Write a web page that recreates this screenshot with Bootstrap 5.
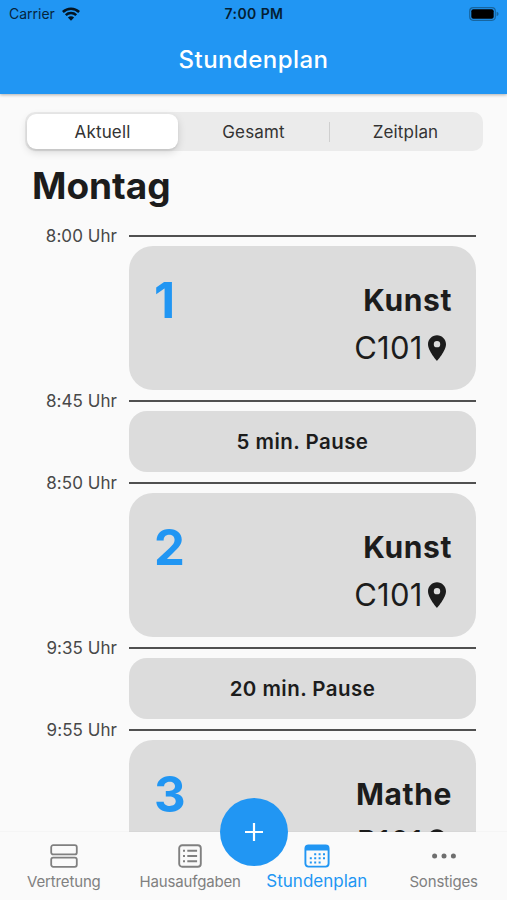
<!DOCTYPE html>
<html lang="de">
<head>
<meta charset="utf-8">
<meta name="viewport" content="width=device-width, initial-scale=1">
<title>Stundenplan</title>
<link href="https://cdn.jsdelivr.net/npm/bootstrap@5.3.0/dist/css/bootstrap.min.css" rel="stylesheet">
<style>
  body { font-family: Inter, "Liberation Sans", sans-serif; background: #fafafa; color: #1c1c1c; }
  .screen { height: 900px; }
  .app-header { height: 94px; background: #2196f3; box-shadow: 0 1px 3px rgba(0,0,0,.3); z-index: 2; }
  .status { height: 27px; padding: 0 8px 0 9px; font-size: 14px; color: #06243d; }
  .status .carrier { gap: 7px; }
  .status .clock { font-size: 14px; font-weight: 600; letter-spacing: .4px; color: #041e33; }
  .app-title { height: 66px; font-size: 24px; font-weight: 500; letter-spacing: .45px; color: #fff; }
  .segments { height: 39px; margin: 18px 24px 0 25px; padding: 2px; border-radius: 10px; background: #ebebeb; font-size: 17px; letter-spacing: .15px; color: #333; }
  .segments .active { background: #fff; border-radius: 9px; box-shadow: 0 3px 8px rgba(0,0,0,.14), 0 2px 2px rgba(0,0,0,.06); }
  .segments .divider { width: 1px; height: 20px; background: #cfcfcf; }
  .segments .label { padding-top: 2px; }
  .day { height: 74.4px; padding: 13px 0 0 32px; font-size: 37px; font-weight: 700; line-height: 44px; letter-spacing: -.05px; }
  .plan { padding-right: 31px; }
  .time-row { height: 21px; }
  .time-row .hour { width: 129px; padding: 1px 12px 0 0; font-size: 17px; line-height: 21px; letter-spacing: .05px; color: #484848; text-align: right; }
  .time-row .rule { height: 1.6px; background: #505050; }
  .lesson, .pause { margin-left: 129px; background: #dcdcdc; flex: none; }
  .lesson { height: 144px; border-radius: 24px; padding: 30px 24px 0 25px; }
  .lesson .num { font-size: 49px; line-height: 49px; font-weight: 700; color: #2196f3; }
  .lesson .subject { font-size: 30px; line-height: 49px; font-weight: 700; letter-spacing: .6px; }
  .lesson .place { font-size: 31px; line-height: 46px; font-weight: 400; letter-spacing: .2px; padding-right: 6px; gap: 5.5px; }
  .pause { height: 61px; border-radius: 18px; font-size: 20.5px; font-weight: 600; letter-spacing: .45px; padding-top: 1px; }
  .tabs { height: 68px; background: #fafafa; color: #808080; font-size: 15px; letter-spacing: -.15px; z-index: 2; box-shadow: 0 -1px 0 rgba(0,0,0,.02); }
  .tabs .tab { width: 25%; padding-top: 11.5px; }
  .tabs .tab:first-child { padding-left: 1px; }
  .tabs svg { height: 24px; }
  .tabs .caption { line-height: 20px; margin-top: 4.5px; white-space: nowrap; }
  .tabs .current { color: #2196f3; }
  .tabs .current .caption { font-size: 17px; letter-spacing: 0; margin-top: 3.5px; }
  .fab { width: 68px; height: 68px; left: 220px; top: -34.5px; background: #2196f3; }
</style>
<script src="https://cdn.jsdelivr.net/npm/bootstrap@5.3.0/dist/js/bootstrap.bundle.min.js"></script>
</head>
<body>
<svg class="d-none">
  <symbol id="pin" viewBox="5 2 14 20"><path fill="currentColor" fill-rule="evenodd" d="M12 2C8.13 2 5 5.13 5 9c0 5.25 7 13 7 13s7-7.75 7-13c0-3.87-3.13-7-7-7zm0 9.5a2.5 2.5 0 0 1 0-5 2.5 2.5 0 0 1 0 5z"/></symbol>
</svg>
<div class="screen d-flex flex-column overflow-hidden">
  <header class="app-header position-relative flex-shrink-0">
    <div class="status d-flex align-items-center">
      <div class="carrier col d-flex align-items-center"><span>Carrier</span>
        <svg width="18" height="14" viewBox="0 0 18 14" fill="none" stroke="#041522" stroke-width="2.5"><path d="M.9 5a11.6 11.6 0 0 1 16.2 0"/><path d="M3.8 8.2a7.4 7.4 0 0 1 10.4 0"/><path d="M9 13.7 5.9 10.5a4.4 4.4 0 0 1 6.2 0z" fill="#041522" stroke="none"/></svg>
      </div>
      <div class="clock">7:00 PM</div>
      <div class="col d-flex justify-content-end">
        <svg width="30" height="14" viewBox="0 0 30 14"><rect x=".7" y=".7" width="25.6" height="12.6" rx="3.5" fill="none" stroke="#17659f" stroke-width="1.2"/><rect x="2.3" y="2.3" width="22.4" height="9.4" rx="2" fill="#000"/><path d="M27.6 4.8q2 .6 2 2.2t-2 2.2z" fill="#17659f"/></svg>
      </div>
    </div>
    <div class="app-title d-flex align-items-center justify-content-center">Stundenplan</div>
  </header>

  <main class="flex-grow-1 overflow-hidden d-flex flex-column">
    <div class="segments d-flex align-items-center flex-shrink-0">
      <div class="active col h-100 d-flex align-items-center justify-content-center"><span class="label">Aktuell</span></div>
      <div class="label col text-center">Gesamt</div>
      <div class="divider"></div>
      <div class="label col text-center">Zeitplan</div>
    </div>
    <div class="day flex-shrink-0">Montag</div>
    <div class="plan">
      <div class="time-row d-flex align-items-center"><div class="hour">8:00 Uhr</div><div class="rule flex-grow-1"></div></div>
      <div class="lesson d-flex justify-content-between">
        <div class="num">1</div>
        <div><div class="subject text-end">Kunst</div><div class="place d-flex align-items-center justify-content-end"><span>C101</span><svg width="18" height="26"><use href="#pin"/></svg></div></div>
      </div>
      <div class="time-row d-flex align-items-center"><div class="hour">8:45 Uhr</div><div class="rule flex-grow-1"></div></div>
      <div class="pause d-flex align-items-center justify-content-center">5 min. Pause</div>
      <div class="time-row d-flex align-items-center"><div class="hour">8:50 Uhr</div><div class="rule flex-grow-1"></div></div>
      <div class="lesson d-flex justify-content-between">
        <div class="num">2</div>
        <div><div class="subject text-end">Kunst</div><div class="place d-flex align-items-center justify-content-end"><span>C101</span><svg width="18" height="26"><use href="#pin"/></svg></div></div>
      </div>
      <div class="time-row d-flex align-items-center"><div class="hour">9:35 Uhr</div><div class="rule flex-grow-1"></div></div>
      <div class="pause d-flex align-items-center justify-content-center">20 min. Pause</div>
      <div class="time-row d-flex align-items-center"><div class="hour">9:55 Uhr</div><div class="rule flex-grow-1"></div></div>
      <div class="lesson d-flex justify-content-between">
        <div class="num">3</div>
        <div><div class="subject text-end">Mathe</div><div class="place d-flex align-items-center justify-content-end"><span>B101</span><svg width="18" height="26"><use href="#pin"/></svg></div></div>
      </div>
    </div>
  </main>

  <nav class="tabs d-flex position-relative flex-shrink-0">
    <div class="tab d-flex flex-column align-items-center">
      <svg width="28" height="24" viewBox="0 0 28 24" fill="none" stroke="currentColor" stroke-width="1.8"><rect x="1.2" y="1.2" width="25.6" height="9.2" rx="2"/><rect x="1.2" y="13.6" width="25.6" height="9.2" rx="2"/></svg>
      <div class="caption">Vertretung</div>
    </div>
    <div class="tab d-flex flex-column align-items-center">
      <svg width="24" height="24" viewBox="0 0 24 24" fill="none" stroke="currentColor" stroke-width="1.9"><rect x="1.2" y="1.2" width="21.6" height="21.6" rx="3"/><path d="M5 6.8h2M5 12h2M5 17.2h2M9.3 6.8h9.8M9.3 12h9.8M9.3 17.2h9.8"/></svg>
      <div class="caption">Hausaufgaben</div>
    </div>
    <div class="tab current d-flex flex-column align-items-center">
      <svg width="26" height="24" viewBox="0 0 26 24"><rect x="1.4" y="1.4" width="23.2" height="21.2" rx="3" fill="none" stroke="currentColor" stroke-width="1.9"/><path fill="currentColor" d="M1 6.5V4a3 3 0 0 1 3-3h18a3 3 0 0 1 3 3v2.5z"/><path stroke="currentColor" stroke-width="2" stroke-dasharray="2 2.4" d="M10.2 10.2h11M5.8 14.3h15.4M5.8 18.4h11"/></svg>
      <div class="caption">Stundenplan</div>
    </div>
    <div class="tab d-flex flex-column align-items-center">
      <svg width="24" height="24" viewBox="0 0 24 24" fill="#6e6e6e"><circle cx="2.6" cy="12" r="2.5"/><circle cx="12" cy="12" r="2.5"/><circle cx="21.4" cy="12" r="2.5"/></svg>
      <div class="caption">Sonstiges</div>
    </div>
    <div class="fab position-absolute rounded-circle d-flex align-items-center justify-content-center">
      <svg width="18" height="18" viewBox="0 0 18 18" stroke="#fff" stroke-width="2.2"><path d="M9 0v18M0 9h18"/></svg>
    </div>
  </nav>
</div>
</body>
</html>
